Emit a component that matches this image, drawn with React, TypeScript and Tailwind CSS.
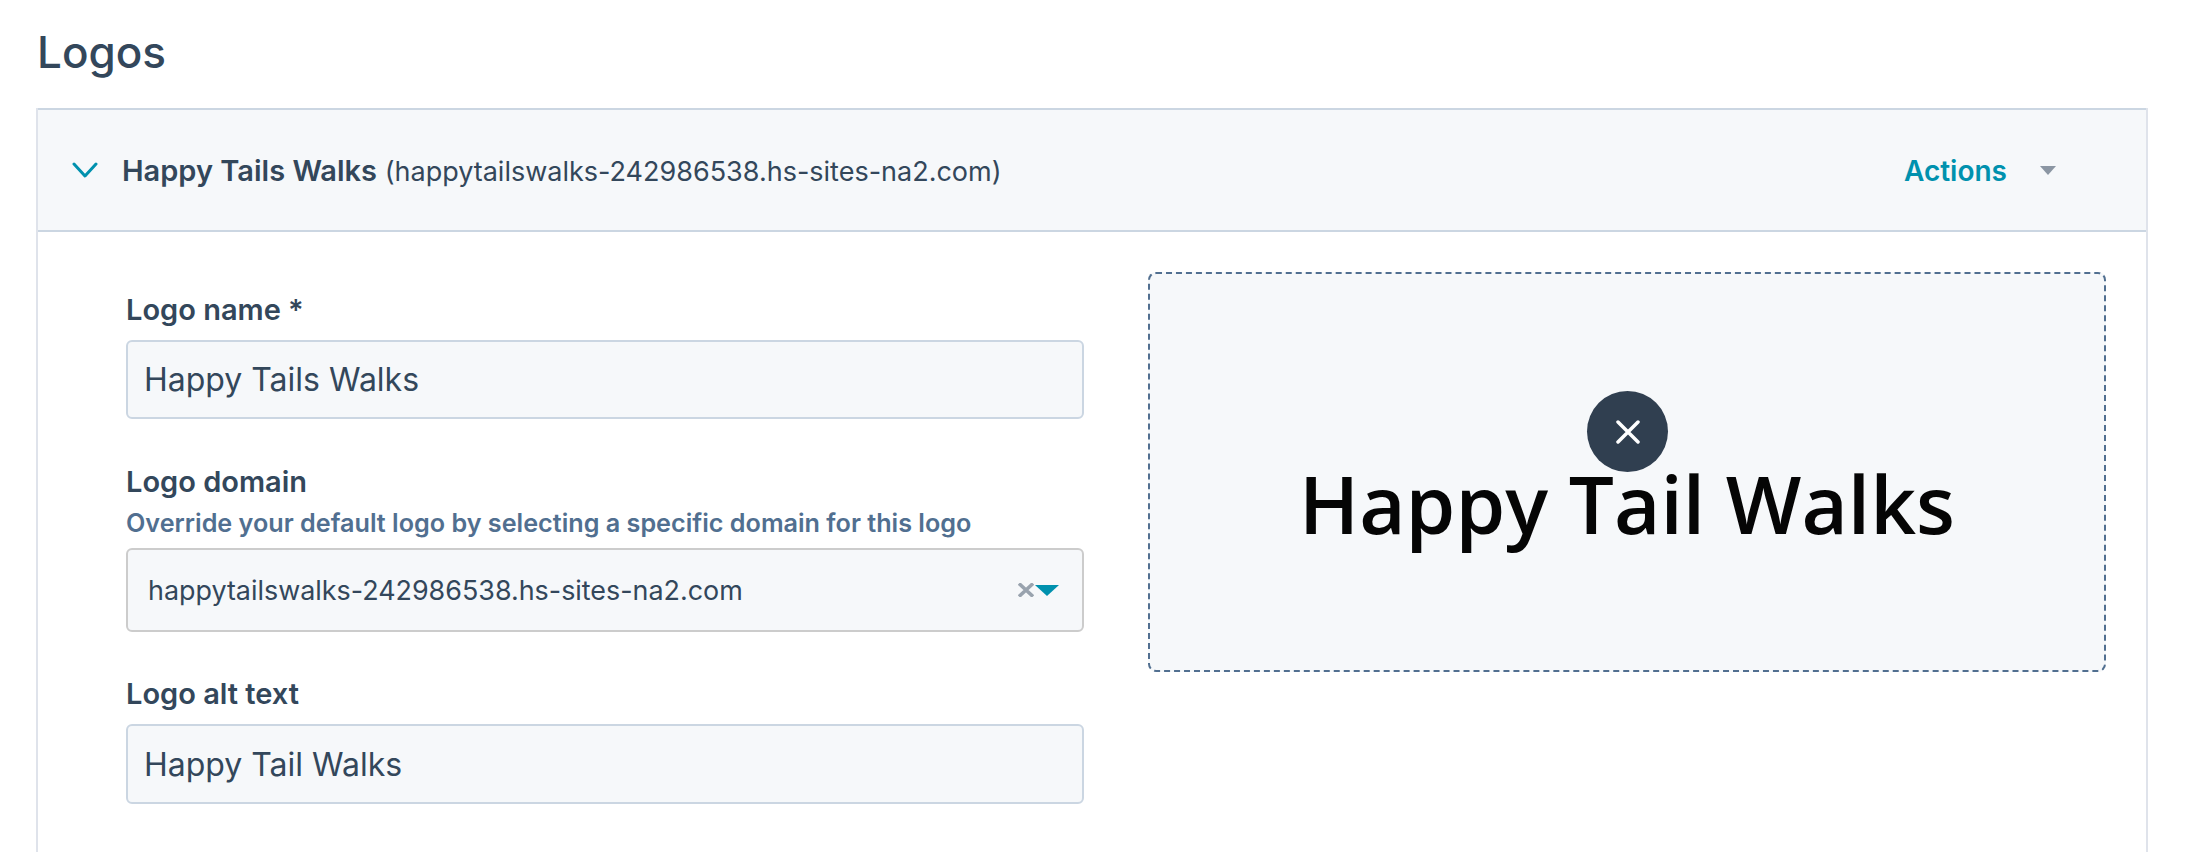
import React from 'react';

const Label: React.FC<{ className?: string; children: React.ReactNode }> = ({ className = '', children }) => (
  <div className={`h-[30px] text-[29px] leading-[30px] font-semibold text-[#33475b] ${className}`}>{children}</div>
);

const TextInput: React.FC<{ value: string; className?: string }> = ({ value, className = '' }) => (
  <input
    readOnly
    value={value}
    className={`block w-full px-[16px] bg-[#f6f8fa] border-2 border-[#cbd6e2] rounded-[6px] text-[32px] text-[#33475b] outline-none ${className}`}
  />
);

export default function App() {
  return (
    <div className="h-[852px] overflow-hidden bg-white font-['Inter','Liberation_Sans',sans-serif]">
      <h1 className="pt-[27px] pl-[37px] h-[108px] text-[44px] leading-[50px] font-medium text-[#33475b]">Logos</h1>

      <section className="ml-[36px] w-[2112px] h-[744px] border-x-2 border-[#dfe3eb]">
        <header className="flex items-center h-[124px] border-y-2 border-y-[#cbd6e2] bg-[#f6f8fa]">
          <svg width="26" height="16" viewBox="0 0 26 16" className="ml-[34px] shrink-0" fill="none">
            <path d="M2 2 L13 14 L24 2" stroke="#0091ae" strokeWidth="3" strokeLinecap="round" strokeLinejoin="round" />
          </svg>
          <div className="ml-[24px] pt-[2px] text-[27px] text-[#33475b] whitespace-nowrap">
            <span className="text-[29px] font-semibold">Happy Tails Walks</span> (happytailswalks-242986538.hs-sites-na2.com)
          </div>
          <div className="ml-auto flex items-center">
            <span className="pt-[2px] text-[28px] font-semibold text-[#0091ae]">Actions</span>
            <svg width="16" height="9" viewBox="0 0 16 9" className="ml-[33px] mr-[90px]">
              <path d="M0 0 H16 L8 9 Z" fill="#8b96a3" />
            </svg>
          </div>
        </header>

        <div className="flex pl-[88px]">
          <div className="w-[958px] pt-[63px] shrink-0">
            <Label className="mb-[15px]">Logo name *</Label>
            <TextInput value="Happy Tails Walks" className="h-[79px]" />

            <Label className="mt-[48px]">Logo domain</Label>
            <div className="mt-[11px] h-[30px] text-[25.2px] leading-[30px] font-semibold text-[#516f90] whitespace-nowrap">
              Override your default logo by selecting a specific domain for this logo
            </div>
            <div className="mt-[10px] h-[84px] flex items-center pl-[20px] pr-[23px] bg-[#f6f8fa] border-2 border-[#cccccc] rounded-[6px]">
              <span className="text-[26.9px] text-[#33475b]">happytailswalks-242986538.hs-sites-na2.com</span>
              <svg width="16" height="14" viewBox="0 0 16 14" className="ml-auto" fill="none">
                <path d="M1 0.5 L15 13.5 M15 0.5 L1 13.5" stroke="#99a3ae" strokeWidth="3.5" />
              </svg>
              <svg width="24" height="11" viewBox="0 0 24 11" className="ml-[1px]">
                <path d="M0 0 H24 L12 11 Z" fill="#0091ae" />
              </svg>
            </div>

            <Label className="mt-[47px] mb-[15px]">Logo alt text</Label>
            <TextInput value="Happy Tail Walks" className="h-[80px]" />
          </div>

          <div className="relative mt-[40px] ml-[64px] w-[958px] h-[400px] flex items-center justify-center pt-[62px] bg-[#f6f8fa] border-2 border-dashed border-[#516f90] rounded-[8px]">
            <span className="text-[80px] leading-none font-['Open_Sans',sans-serif] font-semibold text-[#050505] whitespace-nowrap">
              Happy Tail Walks
            </span>
            <div className="absolute left-[437px] top-[117px] w-[81px] h-[81px] rounded-full bg-[#303f50] flex items-center justify-center">
              <svg width="24" height="24" viewBox="0 0 24 24" fill="none">
                <path d="M2 2 L22 22 M22 2 L2 22" stroke="white" strokeWidth="3.5" strokeLinecap="round" />
              </svg>
            </div>
          </div>
        </div>
      </section>
    </div>
  );
}
